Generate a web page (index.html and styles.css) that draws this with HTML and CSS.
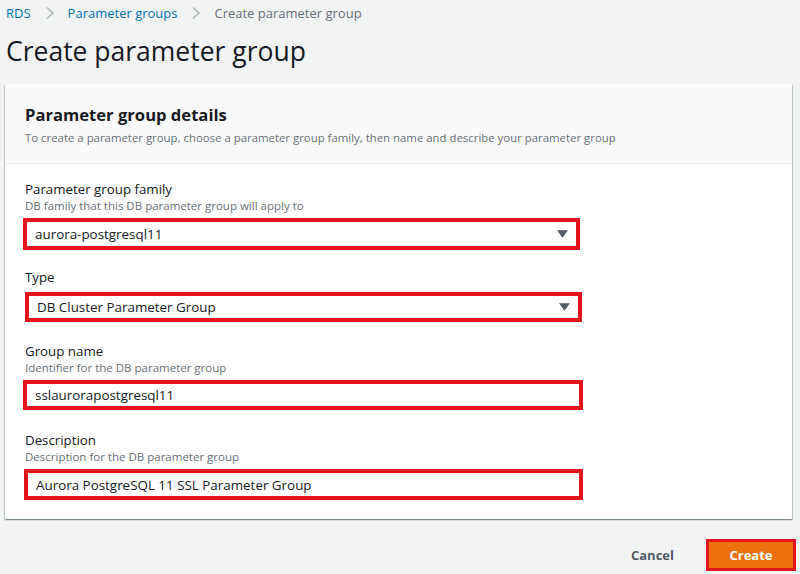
FILE: index.html
```html
<!DOCTYPE html>
<html>
<head>
<meta charset="utf-8">
<link rel="stylesheet" href="styles.css">
</head>
<body>
<nav class="breadcrumb">
  <a class="crumb-link">RDS</a>
  <span class="chev"><svg width="10" height="14" viewBox="0 0 10 14"><path d="M2 1.5 L8 7 L2 12.5" fill="none" stroke="#aab7b8" stroke-width="1.6"/></svg></span>
  <a class="crumb-link">Parameter groups</a>
  <span class="chev"><svg width="10" height="14" viewBox="0 0 10 14"><path d="M2 1.5 L8 7 L2 12.5" fill="none" stroke="#aab7b8" stroke-width="1.6"/></svg></span>
  <span class="crumb-current">Create parameter group</span>
</nav>
<h1 class="page-title">Create parameter group</h1>
<section class="card">
  <header class="card-header">
    <h2 class="card-title">Parameter group details</h2>
    <p class="card-desc">To create a parameter group, choose a parameter group family, then name and describe your parameter group</p>
  </header>
  <div class="card-body">
    <div class="field">
      <div class="label">Parameter group family</div>
      <div class="hint">DB family that this DB parameter group will apply to</div>
      <div class="control w1">
        <span class="value">aurora-postgresql11</span>
        <svg class="caret" width="12" height="8" viewBox="0 0 12 8"><path d="M0 0 H12 L6 8 Z" fill="#545b64"/></svg>
      </div>
    </div>
    <div class="field f2">
      <div class="label">Type</div>
      <div class="control w2">
        <span class="value">DB Cluster Parameter Group</span>
        <svg class="caret" width="12" height="8" viewBox="0 0 12 8"><path d="M0 0 H12 L6 8 Z" fill="#545b64"/></svg>
      </div>
    </div>
    <div class="field f3">
      <div class="label">Group name</div>
      <div class="hint">Identifier for the DB parameter group</div>
      <div class="control w3">
        <span class="value">sslaurorapostgresql11</span>
      </div>
    </div>
    <div class="field f4">
      <div class="label">Description</div>
      <div class="hint">Description for the DB parameter group</div>
      <div class="control w4">
        <span class="value">Aurora PostgreSQL 11 SSL Parameter Group</span>
      </div>
    </div>
  </div>
</section>
<div class="actions">
  <button class="btn-cancel">Cancel</button>
  <div class="create-wrap"><button class="btn-create">Create</button></div>
</div>
</body>
</html>
```
FILE: styles.css
```css
* { box-sizing: border-box; }
html, body { margin: 0; padding: 0; }
body {
  background: #f2f3f3;
  font-family: "Open Sans", "Noto Sans", sans-serif;
  color: #16191f;
  width: 800px;
  height: 574px;
  overflow: hidden;
}
.breadcrumb {
  display: flex;
  align-items: center;
  padding: 3px 0 0 6px;
  height: 22px;
  font-size: 13px;
}
.crumb-link { color: #0073bb; }
.crumb-current { color: #687078; }
.chev { display: flex; margin: 0 13px 0 14px; }
.page-title {
  margin: 12px 0 0 6px;
  font-size: 26.5px;
  font-weight: 400;
  line-height: 34px;
  color: #16191f;
}
.card {
  margin: 16px 8px 0 5px;
  background: #fff;
  box-shadow: 0 1px 1px rgba(0,28,36,0.3), 1px 1px 1px rgba(0,28,36,0.15), -1px 1px 1px rgba(0,28,36,0.15);
}
.card-header {
  background: #fafafa;
  border-bottom: 1px solid #eaeded;
  padding: 19px 20px 17px 20px;
}
.card-title {
  margin: 0;
  font-size: 16.6px;
  font-weight: 700;
  line-height: 24px;
}
.card-desc {
  margin: 3px 0 0 0;
  font-size: 11.4px;
  line-height: 16px;
  color: #687078;
}
.card-body {
  padding: 15px 20px 19px 18px;
  display: flex;
  flex-direction: column;
}
.f2 { margin-top: 17px; }
.f3 { margin-top: 19px; }
.f4 { margin-top: 20px; }
.label {
  font-size: 13.3px;
  line-height: 20px;
  padding-left: 2px;
}
.hint {
  font-size: 11.5px;
  line-height: 14px;
  color: #687078;
  padding-left: 2px;
}
.control {
  display: flex;
  align-items: center;
  justify-content: space-between;
  border: 4px solid #e3141d;
  background: #fff;
  padding: 0 8px 0 8px;
  font-size: 13.4px;
}
.caret { flex: none; width: 11px; height: 8px; }
.w1 { width: 557px; height: 32px; margin-top: 5px; }
.w2 { width: 557px; height: 30px; margin-top: 5px; margin-left: 2px; }
.w3 { width: 560px; height: 30px; margin-top: 5px; }
.w4 { width: 559px; height: 31px; margin-top: 5px; margin-left: 1px; }
.actions {
  display: flex;
  justify-content: flex-end;
  align-items: center;
  padding: 20px 4px 0 0;
  gap: 32px;
}
.btn-cancel {
  background: none;
  border: none;
  font-family: inherit;
  font-weight: 700;
  font-size: 13px;
  color: #545b64;
  padding: 0;
}
.create-wrap {
  border: 3px solid #e3141d;
}
.btn-create {
  display: block;
  width: 84px;
  height: 26px;
  background: #ec7211;
  border: none;
  color: #fff;
  font-family: inherit;
  font-weight: 700;
  font-size: 13px;
  padding: 0;
}
```
